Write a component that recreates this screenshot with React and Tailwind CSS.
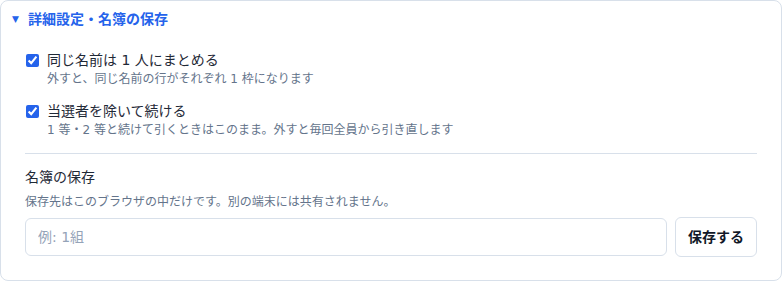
export default function App() {
  return (
    <div className="bg-white w-[782px] h-[281px]" style={{ fontFamily: '"DejaVu Sans", "Noto Sans CJK JP", sans-serif' }}>
      <details open className="border border-[#d8e0ea] rounded-lg h-[281px]">
        <summary className="list-none flex items-center h-[36px] pl-[11px] text-[14px] font-bold text-[#2563eb] cursor-pointer [&::-webkit-details-marker]:hidden">
          <span className="text-[9px] mr-[9px] leading-none">▼</span>
          詳細設定・名簿の保存
        </summary>
        <div className="px-6 pt-[13px] pb-6">
          <label className="flex gap-2 items-start">
            <input type="checkbox" defaultChecked className="mt-[4px] ml-px w-[13px] h-[13px] accent-[#2563eb]" />
            <span>
              <span className="block text-[14px] leading-[20px] text-[#1f2937]">同じ名前は 1 人にまとめる</span>
              <span className="block text-[12px] leading-[16px] mt-[1px] text-[#64748b]">外すと、同じ名前の行がそれぞれ 1 枠になります</span>
            </span>
          </label>
          <label className="flex gap-2 items-start mt-[14px]">
            <input type="checkbox" defaultChecked className="mt-[4px] ml-px w-[13px] h-[13px] accent-[#2563eb]" />
            <span>
              <span className="block text-[14px] leading-[20px] text-[#1f2937]">当選者を除いて続ける</span>
              <span className="block text-[12px] leading-[16px] mt-[1px] text-[#64748b]">1 等・2 等と続けて引くときはこのまま。外すと毎回全員から引き直します</span>
            </span>
          </label>
          <div className="border-t border-[#d8e0ea] mt-[15px] pt-[13px]">
            <div className="text-[14px] leading-[20px] text-[#1f2937]">名簿の保存</div>
            <div className="text-[12px] leading-[16px] mt-[7px] text-[#64748b]">保存先はこのブラウザの中だけです。別の端末には共有されません。</div>
            <div className="flex gap-2 items-center mt-[7px]">
              <input
                type="text"
                placeholder="例: 1組"
                className="flex-1 h-[38px] border border-[#d8e0ea] rounded-md px-3 text-[14px] placeholder:text-[#94a3b8] outline-none"
              />
              <button className="h-[40px] w-[82px] border border-[#d8e0ea] rounded-md text-[14px] font-bold text-[#111827] bg-white">
                保存する
              </button>
            </div>
          </div>
        </div>
      </details>
    </div>
  );
}
